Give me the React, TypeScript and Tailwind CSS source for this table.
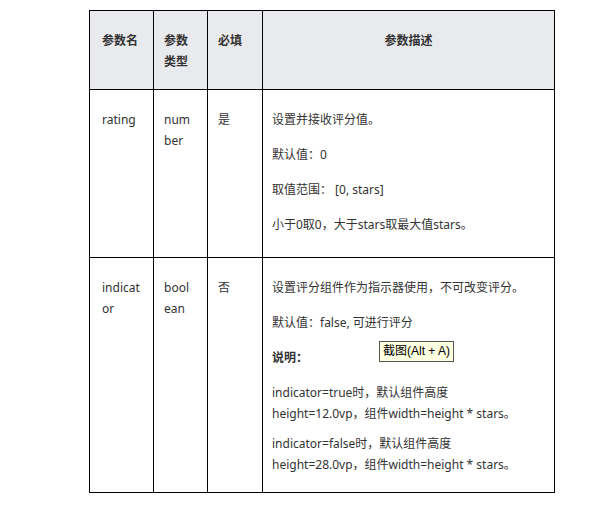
const font = "font-['Noto_Sans','Noto_Sans_CJK_SC',sans-serif]";

export default function App() {
  return (
    <div className={`min-h-[506px] w-[596px] bg-white text-[12px] leading-[21px] text-[#333] ${font}`}>
      <div className="pl-[89px] pt-[10px]">
        <table className="w-[466px] table-fixed border-collapse">
          <colgroup>
            <col className="w-[64px]" />
            <col className="w-[54px]" />
            <col className="w-[55px]" />
            <col />
          </colgroup>
          <thead>
            <tr className="bg-[#e9eaee] align-top leading-[21px]">
              <th className="border border-black pl-[12px] pr-[10px] pt-[19px] pb-[17px] text-left font-bold">参数名</th>
              <th className="border border-black pl-[10px] pr-[12px] pt-[19px] pb-[17px] text-left font-bold">参数类型</th>
              <th className="border border-black pl-[10px] pr-[10px] pt-[19px] pb-[17px] text-left font-bold">必填</th>
              <th className="border border-black px-[10px] pt-[19px] pb-[17px] text-center font-bold">参数描述</th>
            </tr>
          </thead>
          <tbody>
            <tr className="align-top">
              <td className="break-all border border-black pl-[12px] pr-[10px] pt-[19px]">rating</td>
              <td className="break-all border border-black pl-[10px] pr-[14px] pt-[19px]">number</td>
              <td className="border border-black pl-[10px] pr-[10px] pt-[19px]">是</td>
              <td className="border border-black pl-[9px] pr-[10px] pt-[19px] pb-[22px]">
                <p>设置并接收评分值。</p>
                <p className="mt-[14px]">默认值：0</p>
                <p className="mt-[14px]">取值范围： [0, stars]</p>
                <p className="mt-[14px]">小于0取0，大于stars取最大值stars。</p>
              </td>
            </tr>
            <tr className="align-top">
              <td className="break-all border border-black pl-[12px] pr-[10px] pt-[19px]">indicator</td>
              <td className="break-all border border-black pl-[10px] pr-[14px] pt-[19px]">boolean</td>
              <td className="border border-black pl-[10px] pr-[10px] pt-[19px]">否</td>
              <td className="border border-black pl-[9px] pr-[10px] pt-[19px] pb-[17px]">
                <p>设置评分组件作为指示器使用，不可改变评分。</p>
                <p className="mt-[14px]">默认值：false, 可进行评分</p>
                <p className="relative mt-[14px] font-bold">
                  说明：
                  <span className="absolute left-[107px] top-[-6px] whitespace-nowrap border border-[#555] bg-[#ffffe1] px-[3px] text-[12px] font-normal leading-[19px] text-black font-['Liberation_Sans','Noto_Sans_CJK_SC',sans-serif]">
                    截图(Alt + A)
                  </span>
                </p>
                <p className="mt-[14px]">
                  indicator=true时，默认组件高度
                  <br />
                  height=12.0vp，组件width=height * stars。
                </p>
                <p className="mt-[9px]">
                  indicator=false时，默认组件高度
                  <br />
                  height=28.0vp，组件width=height * stars。
                </p>
              </td>
            </tr>
          </tbody>
        </table>
      </div>
    </div>
  );
}
